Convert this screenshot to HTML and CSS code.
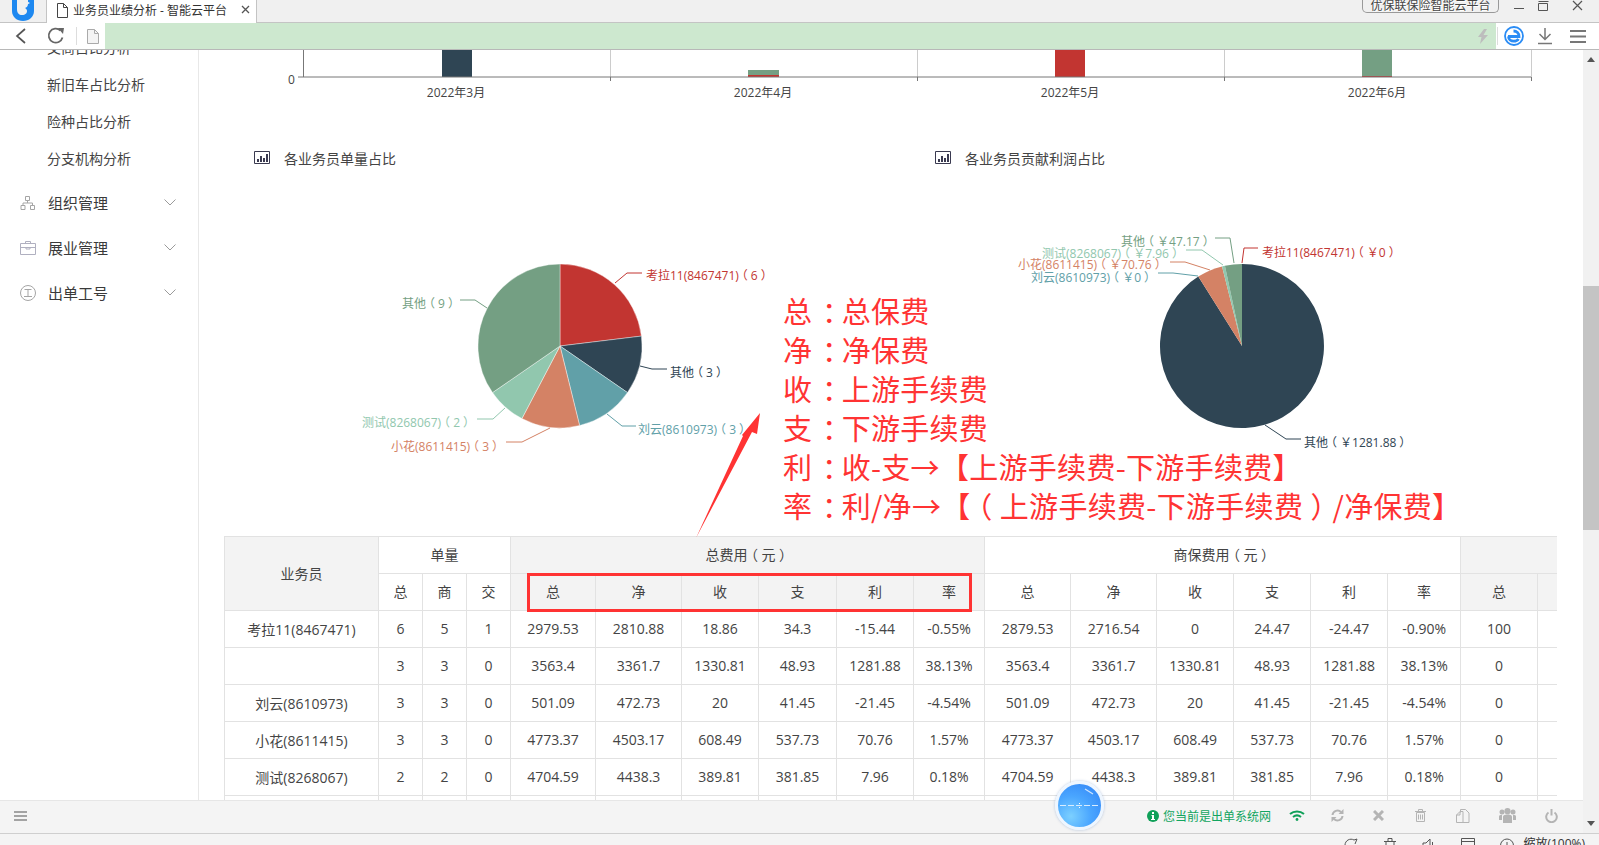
FILE: index.html
```html
<!DOCTYPE html>
<html lang="zh-CN">
<head>
<meta charset="utf-8">
<title>业务员业绩分析 - 智能云平台</title>
<link rel="stylesheet" href="styles.css">
</head>
<body>
<div class="app">
  <header class="tabbar">
    <div class="logo-tab">
      <svg width="24" height="21" viewBox="0 0 24 21"><path fill="#1e88f0" d="M1 0h5v9c0 4 2 6 5 6 3.500 0 5-2 5-4 0-1.500-1-2.500-2-3 1.500-.5 3-1.500 3-4V0h6v11c0 6-5 10-11 10S1 17 1 11z"/><path fill="#fff" d="M17 2l2 1-2 1z"/></svg>
    </div>
    <div class="tab">
      <svg class="tab-doc" width="12" height="15" viewBox="0 0 12 15"><path fill="none" stroke="#444" d="M1.500.5h6l4 4v10h-10zM7.500.5v4h4"/></svg>
      <span class="tab-title">业务员业绩分析 - 智能云平台</span>
      <svg class="tab-close" width="9" height="9" viewBox="0 0 9 9"><path stroke="#555" stroke-width="1.300" d="M1 1l7 7M8 1l-7 7"/></svg>
    </div>
    <div class="window-tools">
      <span class="app-badge">优保联保险智能云平台</span>
      <svg class="win-min" width="12" height="12" viewBox="0 0 12 12"><path stroke="#555" d="M1 8.500h10"/></svg>
      <svg class="win-max" width="13" height="12" viewBox="0 0 13 12"><path fill="none" stroke="#555" d="M1.500 3.500h9v7h-9zM1.500 1.500h10"/></svg>
      <svg class="win-close" width="12" height="12" viewBox="0 0 12 12"><path stroke="#555" stroke-width="1.200" d="M1 1l9 9M10 1l-9 9"/></svg>
    </div>
  </header>
  <nav class="toolbar">
    <svg class="tb-back" width="12" height="16" viewBox="0 0 12 16"><path fill="none" stroke="#555" stroke-width="1.700" d="M10 1L2 8l8 7"/></svg>
    <svg class="tb-reload" width="18" height="18" viewBox="0 0 18 18"><path fill="none" stroke="#666" stroke-width="1.800" d="M15.500 10.500A7 7 0 1 1 13.500 3.500"/><path fill="#666" d="M11 1l6 0-1 6z"/></svg>
    <span class="tb-sep"></span>
    <svg class="tb-doc" width="12" height="15" viewBox="0 0 12 15"><path fill="#f4f4f4" stroke="#aaa" d="M.5.5h7l4 4v10H.5z"/><path fill="none" stroke="#aaa" d="M7.500.5v4h4"/></svg>
    <div class="urlbar">
      <svg width="10" height="15" viewBox="0 0 10 15"><path fill="#bdbdbd" d="M6 0L0 8h3.500L2 15l8-9H5.500L9 0z"/></svg>
    </div>
    <span class="tb-sep tb-sep-r"></span>
    <svg class="tb-edge" width="20" height="20" viewBox="0 0 20 20"><circle cx="10" cy="10" r="9" fill="#fff" stroke="#2a8cf5" stroke-width="1.800"/><path fill="none" stroke="#2a8cf5" stroke-width="2.800" d="M4 10.500h11c0-3.200-2.300-5.500-5.500-5.500M4.500 10.500c0 2.800 2.500 4.700 5.200 4.700 2 0 3.800-.7 4.800-2.200"/></svg>
    <svg class="tb-down" width="16" height="17" viewBox="0 0 16 17"><path fill="none" stroke="#777" stroke-width="1.500" d="M8 0v11M2.500 6L8 11.500 13.500 6M1 15.500h14"/></svg>
    <svg class="tb-menu" width="16" height="13" viewBox="0 0 16 13"><path stroke="#777" stroke-width="2" d="M0 1h16M0 6.500h16M0 12h16"/></svg>
  </nav>

  <div class="viewport">
    <div class="page">
      <div class="main">
        <aside class="sidebar">
          <ul class="submenu">
            <li>交商占比分析</li>
            <li>新旧车占比分析</li>
            <li>险种占比分析</li>
            <li>分支机构分析</li>
          </ul>
          <div class="menu-item">
            <svg class="menu-icon" width="16" height="16" viewBox="0 0 16 16"><path fill="none" stroke="#a5a5a5" d="M5.500 1.500h4v4h-4zM1 10.500h4v4H1zM10.500 10.500h4v4h-4zM7.500 5.500V8M3 10.500V8h9.500v2.500"/></svg>
            <span class="menu-text">组织管理</span>
            <svg class="chevron" width="12" height="7" viewBox="0 0 12 7"><path fill="none" stroke="#9a9a9a" d="M.5.5L6 6l5.500-5.500"/></svg>
          </div>
          <div class="menu-item">
            <svg class="menu-icon" width="16" height="16" viewBox="0 0 16 16"><path fill="none" stroke="#b0b0c0" d="M.5 3.500h15v11H.5zM5.500 3.500V1.500h5v2M.5 7.500h15M6 7.500v1.500h4V7.500"/></svg>
            <span class="menu-text">展业管理</span>
            <svg class="chevron" width="12" height="7" viewBox="0 0 12 7"><path fill="none" stroke="#9a9a9a" d="M.5.500L6 6l5.500-5.500"/></svg>
          </div>
          <div class="menu-item">
            <svg class="menu-icon" width="16" height="16" viewBox="0 0 16 16"><circle cx="8" cy="8" r="7.500" fill="none" stroke="#a5a5a5"/><path fill="none" stroke="#a5a5a5" d="M4.500 4.500h7M8 4.500v7M4 11.500h8"/></svg>
            <span class="menu-text">出单工号</span>
            <svg class="chevron" width="12" height="7" viewBox="0 0 12 7"><path fill="none" stroke="#9a9a9a" d="M.5.500L6 6l5.500-5.500"/></svg>
          </div>
        </aside>

        <section class="content">
          <svg class="bar-chart" width="1384" height="60" viewBox="199 50 1384 60">
            <g class="grid-line"><path d="M610.500 50v27M917.500 50v27M1224.500 50v27M1531.500 50v27"/></g>
            <rect x="442" y="50" width="30" height="27" fill="#2f4554"/>
            <rect x="748" y="70" width="31" height="6" fill="#749f83"/>
            <rect x="748" y="75" width="31" height="2" fill="#c23531"/>
            <rect x="1055" y="50" width="30" height="27" fill="#c23531"/>
            <rect x="1362" y="50" width="30" height="26" fill="#749f83"/>
            <rect x="1362" y="76" width="30" height="1" fill="#c23531"/>
            <g class="axis-line"><path d="M303.500 50v27M298 77h5M303 77h1228M610.500 77v4M917.500 77v4M1224.500 77v4M1531.500 77v4"/></g>
            <text class="axis-num" x="288" y="79">0</text>
            <text class="axis-label" x="456" y="92">2022年3月</text>
            <text class="axis-label" x="763" y="92">2022年4月</text>
            <text class="axis-label" x="1070" y="92">2022年5月</text>
            <text class="axis-label" x="1377" y="92">2022年6月</text>
          </svg>

          <div class="pies">
            <div class="pie-panel">
              <h3 class="pie-title">
                <svg width="16" height="13" viewBox="0 0 16 13"><path fill="none" stroke="#3a3a50" d="M.5.500h15v12H.5z"/><path fill="#3a3a50" d="M3 8h2v3H3zM6 5h2v6H6zM9 7h2v4H9zM12 3h2v8h-2z"/></svg>
                <span>各业务员单量占比</span>
              </h3>
              <svg class="pie" width="681" height="366" viewBox="254 170 681 366">
                <path class="slice" fill="#c23531" d="M560 346V264A82 82 0 0 1 641.400 336.100Z"/>
                <path class="slice" fill="#2f4554" d="M560 346L641.400 336.100A82 82 0 0 1 627.500 392.600Z"/>
                <path class="slice" fill="#61a0a8" d="M560 346L627.500 392.600A82 82 0 0 1 579.600 425.600Z"/>
                <path class="slice" fill="#d48265" d="M560 346L579.600 425.600A82 82 0 0 1 521.900 418.600Z"/>
                <path class="slice" fill="#91c7ae" d="M560 346L521.900 418.600A82 82 0 0 1 492.500 392.600Z"/>
                <path class="slice" fill="#749f83" d="M560 346L492.500 392.600A82 82 0 0 1 560 264Z"/>
                <path class="lead s-red" d="M615 283l12-10h15"/>
                <path class="lead s-dark" d="M640 366l12 3h15"/>
                <path class="lead s-teal" d="M607 414l15 12h14"/>
                <path class="lead s-orange" d="M550 428l-28 14h-16"/>
                <path class="lead s-light" d="M505 408l-12 11h-16"/>
                <path class="lead s-green" d="M487 308l-12-8h-15"/>
                <text class="lbl f-red" x="646" y="275">考拉11(8467471)<tspan dx="-3">（</tspan><tspan dx="3">6</tspan><tspan dx="3">）</tspan></text>
                <text class="lbl f-dark" x="670" y="372">其他<tspan dx="-3">（</tspan><tspan dx="3">3</tspan><tspan dx="3">）</tspan></text>
                <text class="lbl f-teal" x="638" y="429">刘云(8610973)<tspan dx="-3">（</tspan><tspan dx="3">3</tspan><tspan dx="3">）</tspan></text>
                <text class="lbl f-orange" x="391" y="446">小花(8611415)<tspan dx="-3">（</tspan><tspan dx="3">3</tspan><tspan dx="3">）</tspan></text>
                <text class="lbl f-light" x="362" y="422">测试(8268067)<tspan dx="-3">（</tspan><tspan dx="3">2</tspan><tspan dx="3">）</tspan></text>
                <text class="lbl f-green" x="402" y="303">其他<tspan dx="-3">（</tspan><tspan dx="3">9</tspan><tspan dx="3">）</tspan></text>
              </svg>
            </div>
            <div class="pie-panel">
              <h3 class="pie-title">
                <svg width="16" height="13" viewBox="0 0 16 13"><path fill="none" stroke="#3a3a50" d="M.5.500h15v12H.5z"/><path fill="#3a3a50" d="M3 8h2v3H3zM6 5h2v6H6zM9 7h2v4H9zM12 3h2v8h-2z"/></svg>
                <span>各业务员贡献利润占比</span>
              </h3>
              <svg class="pie" width="648" height="366" viewBox="935 170 648 366">
                <path fill="#2f4554" d="M1242 346V264A82 82 0 1 1 1198.300 276.600Z"/>
                <path fill="#d48265" d="M1242 346L1198.300 276.600A82 82 0 0 1 1222.050 266.460Z"/>
                <path fill="#91c7ae" d="M1242 346L1222.050 266.460A82 82 0 0 1 1224.900 265.800Z"/>
                <path fill="#749f83" d="M1242 346L1224.900 265.800A82 82 0 0 1 1242 264Z"/>
                <path class="lead s-green" d="M1215 238h15l4 25"/>
                <path class="lead s-red" d="M1242 263l2-15h14"/>
                <path class="lead s-light" d="M1186 250h16l21 15"/>
                <path class="lead s-orange" d="M1170 262h15l25 8"/>
                <path class="lead s-teal" d="M1158 273h15l25 3"/>
                <path class="lead s-dark" d="M1265 425l21 14h15"/>
                <text class="lbl f-green" x="1121" y="241">其他<tspan dx="-3">（</tspan><tspan dx="3">￥47.17</tspan><tspan dx="3">）</tspan></text>
                <text class="lbl f-red" x="1262" y="252">考拉11(8467471)<tspan dx="-3">（</tspan><tspan dx="3">￥0</tspan><tspan dx="3">）</tspan></text>
                <text class="lbl f-light" x="1042" y="253">测试(8268067)<tspan dx="-3">（</tspan><tspan dx="3">￥7.96</tspan><tspan dx="3">）</tspan></text>
                <text class="lbl f-orange" x="1018" y="264">小花(8611415)<tspan dx="-3">（</tspan><tspan dx="3">￥70.76</tspan><tspan dx="3">）</tspan></text>
                <text class="lbl f-teal" x="1031" y="277">刘云(8610973)<tspan dx="-3">（</tspan><tspan dx="3">￥0</tspan><tspan dx="3">）</tspan></text>
                <text class="lbl f-dark" x="1304" y="442">其他<tspan dx="-3">（</tspan><tspan dx="3">￥1281.88</tspan><tspan dx="3">）</tspan></text>
              </svg>
            </div>
          </div>

          <div class="table-wrap">
            <table class="report">
              <colgroup>
                <col class="c154"><col class="c44"><col class="c44"><col class="c44">
                <col class="c85"><col class="c86"><col class="c77"><col class="c78"><col class="c77"><col class="c71">
                <col class="c86"><col class="c86"><col class="c77"><col class="c77"><col class="c77"><col class="c73">
                <col class="c77"><col class="c77">
              </colgroup>
              <thead>
                <tr>
                  <th rowspan="2" class="grey">业务员</th>
                  <th colspan="3">单量</th>
                  <th colspan="6" class="grey">总费用<span class="po">（</span>元<span class="pc">）</span></th>
                  <th colspan="6">商保费用<span class="po">（</span>元<span class="pc">）</span></th>
                  <th colspan="2" class="grey"></th>
                </tr>
                <tr>
                  <th>总</th><th>商</th><th>交</th>
                  <th class="grey">总</th><th class="grey">净</th><th class="grey">收</th><th class="grey">支</th><th class="grey">利</th><th class="grey">率</th>
                  <th>总</th><th>净</th><th>收</th><th>支</th><th>利</th><th>率</th>
                  <th class="grey">总</th><th class="grey"></th>
                </tr>
              </thead>
              <tbody>
                <tr><td>考拉11(8467471)</td><td>6</td><td>5</td><td>1</td><td>2979.53</td><td>2810.88</td><td>18.86</td><td>34.3</td><td>-15.44</td><td>-0.55%</td><td>2879.53</td><td>2716.54</td><td>0</td><td>24.47</td><td>-24.47</td><td>-0.90%</td><td>100</td><td></td></tr>
                <tr><td></td><td>3</td><td>3</td><td>0</td><td>3563.4</td><td>3361.7</td><td>1330.81</td><td>48.93</td><td>1281.88</td><td>38.13%</td><td>3563.4</td><td>3361.7</td><td>1330.81</td><td>48.93</td><td>1281.88</td><td>38.13%</td><td>0</td><td></td></tr>
                <tr><td>刘云(8610973)</td><td>3</td><td>3</td><td>0</td><td>501.09</td><td>472.73</td><td>20</td><td>41.45</td><td>-21.45</td><td>-4.54%</td><td>501.09</td><td>472.73</td><td>20</td><td>41.45</td><td>-21.45</td><td>-4.54%</td><td>0</td><td></td></tr>
                <tr><td>小花(8611415)</td><td>3</td><td>3</td><td>0</td><td>4773.37</td><td>4503.17</td><td>608.49</td><td>537.73</td><td>70.76</td><td>1.57%</td><td>4773.37</td><td>4503.17</td><td>608.49</td><td>537.73</td><td>70.76</td><td>1.57%</td><td>0</td><td></td></tr>
                <tr><td>测试(8268067)</td><td>2</td><td>2</td><td>0</td><td>4704.59</td><td>4438.3</td><td>389.81</td><td>381.85</td><td>7.96</td><td>0.18%</td><td>4704.59</td><td>4438.3</td><td>389.81</td><td>381.85</td><td>7.96</td><td>0.18%</td><td>0</td><td></td></tr>
                <tr><td></td><td></td><td></td><td></td><td></td><td></td><td></td><td></td><td></td><td></td><td></td><td></td><td></td><td></td><td></td><td></td><td></td><td></td></tr>
              </tbody>
            </table>
            <div class="red-box"></div>
          </div>

          <div class="note">
            <div>总<span class="colon">：</span>总保费</div>
            <div>净<span class="colon">：</span>净保费</div>
            <div>收<span class="colon">：</span>上游手续费</div>
            <div>支<span class="colon">：</span>下游手续费</div>
            <div>利<span class="colon">：</span>收-支→【上游手续费-下游手续费】</div>
            <div>率<span class="colon">：</span>利/净→【<span class="po">（</span>上游手续费-下游手续费<span class="pc">）</span>/净保费】</div>
          </div>
          <svg class="note-arrow" width="70" height="130" viewBox="694 411 70 130"><path fill="#ff3333" d="M696 538L743 436l-1-1 18-22-3 21-5-2z"/></svg>
        </section>
      </div>

      <footer class="bottombar">
        <svg class="bb-menu" width="13" height="10" viewBox="0 0 13 10"><path stroke="#888" stroke-width="1.300" d="M0 1h13M0 5h13M0 9h13"/></svg>
        <div class="bb-right">
          <svg class="bb-info" width="12" height="12" viewBox="0 0 12 12"><circle cx="6" cy="6" r="6" fill="#0fa058"/><path fill="#fff" d="M5 2h2v2H5zM4.500 5H7v4h1v1H4V9h1V6h-.5z"/></svg>
          <span class="bb-text">您当前是出单系统网</span>
          <span class="slot"><svg width="16" height="11" viewBox="0 0 16 11"><path fill="none" stroke="#0fa058" stroke-width="2" d="M1 4c4-3.500 10-3.500 14 0M4 7c2.500-2 5.500-2 8 0"/><circle cx="8" cy="9.500" r="1.400" fill="#0fa058"/></svg></span>
          <span class="slot"><svg width="13" height="13" viewBox="0 0 13 13"><path fill="none" stroke="#b4b4b4" stroke-width="2" d="M1.500 6a5 5 0 0 1 8.500-3M11.500 7a5 5 0 0 1-8.500 3"/><path fill="#b4b4b4" d="M12.500 0v5h-5zM.5 13V8h5z"/></svg></span>
          <span class="slot"><svg width="11" height="11" viewBox="0 0 11 11"><path stroke="#b4b4b4" stroke-width="3" d="M1 1l9 9M10 1l-9 9"/></svg></span>
          <span class="slot slot-mid"><svg width="11" height="13" viewBox="0 0 11 13"><path fill="none" stroke="#b4b4b4" d="M1.500 3.500h8v9h-8zM0 2.500h11M3.500 2.500V.5h4v2M3.500 5.500v5M5.500 5.500v5M7.500 5.500v5"/></svg></span>
          <span class="slot slot-wide"><svg width="14" height="14" viewBox="0 0 14 14"><path fill="none" stroke="#b4b4b4" d="M4.500 3.500V.5h5l3.500 3.500v9.500H7M.5 6L4 2.500h3v11H.5zM4 2.500V6H.5"/></svg></span>
          <span class="slot slot-wide"><svg width="17" height="15" viewBox="0 0 17 15"><g fill="#b4b4b4"><circle cx="8.500" cy="3.200" r="3.100"/><circle cx="3" cy="4" r="2.500"/><circle cx="14" cy="4" r="2.500"/><path d="M4 15V9c0-1.500 1-2.500 4.500-2.500S13 7.500 13 9v6zM0 12V8.500c0-1 1-1.800 3-1.800V12zM17 12V8.500c0-1-1-1.800-3-1.800V12z"/></g></svg></span>
          <span class="slot slot-wide"><svg width="13" height="14" viewBox="0 0 13 14"><path fill="none" stroke="#b4b4b4" stroke-width="2" d="M3.500 3.500a5.300 5.300 0 1 0 6 0M6.500 0v6.500"/></svg></span>
        </div>
      </footer>

      <div class="ball">
        <svg width="43" height="43" viewBox="0 0 43 43"><path stroke="#d8ecff" stroke-width="1.200" fill="none" stroke-dasharray="6 2" d="M2 21.500h39"/><path stroke="#fff" stroke-width="1" d="M21.500 19v1M21.500 23v1"/><path stroke="#cfe6ff" stroke-width="1.200" fill="none" d="M27 5l8 5"/></svg>
      </div>
    </div>
    <div class="scrollbar">
      <span class="sb-up"></span>
      <span class="sb-thumb"></span>
      <span class="sb-down"></span>
    </div>
  </div>

  <footer class="statusbar">
    <svg width="14" height="14" viewBox="0 0 14 14"><path fill="none" stroke="#555" d="M1 13V7a6 6 0 0 1 9-5l3-1-2 5"/></svg>
    <svg width="14" height="14" viewBox="0 0 14 14"><path fill="none" stroke="#555" d="M1 3.500h12M3 3.500V13h8V3.500M5 3.500v-3h4v3"/></svg>
    <svg width="14" height="14" viewBox="0 0 14 14"><path fill="none" stroke="#555" d="M1 5v6h3l4 3V1L4 5zM10.500 4v7"/></svg>
    <svg width="14" height="14" viewBox="0 0 14 14"><path fill="none" stroke="#555" d="M.5.500h13V14H.5zM.5 3.500h13"/></svg>
    <svg width="14" height="14" viewBox="0 0 14 14"><circle cx="7" cy="7.500" r="6.500" fill="none" stroke="#555"/><path stroke="#555" d="M7 4v7M3.500 7.500h7"/></svg>
    <span>缩放(100%)</span>
  </footer>
</div>
</body>
</html>
```
FILE: styles.css
```css
* { box-sizing: border-box; }
html, body { margin: 0; padding: 0; height: 100%; overflow: hidden; background: #fff; }
body { font-family: "Open Sans", "Noto Sans CJK SC", sans-serif; color: #333; text-spacing-trim: space-all; }
ul { list-style: none; margin: 0; padding: 0; }
h3 { margin: 0; font-weight: normal; }
svg { display: block; flex: none; }
.po { margin-left: -.25em; margin-right: .25em; }
.pc { margin-left: .25em; margin-right: -.25em; }
.colon { margin-left: .33em; margin-right: -.33em; }

.app { width: 1599px; height: 845px; display: flex; flex-direction: column; overflow: hidden; }

/* tabs */
.tabbar { height: 23px; flex: none; display: flex; background: #f0f0f0; border-bottom: 1px solid #c4c4c4; position: relative; }
.logo-tab { width: 47px; height: 22px; border-right: 1px solid #c4c4c4; padding-left: 11px; }
.tab { width: 210px; height: 23px; background: #fff; border-right: 1px solid #c4c4c4; display: flex; align-items: center; padding: 0 6px 4px 9px; font-size: 12px; color: #333; }
.tab-doc { margin-top: 2px; }
.tab-title { margin-left: 5px; white-space: nowrap; flex: 1; }
.window-tools { margin-left: auto; display: flex; align-items: flex-start; height: 22px; }
.app-badge { width: 137px; height: 13px; border: 1px solid #999; border-top: none; border-radius: 0 0 5px 5px; font-size: 12px; line-height: 11px; text-align: center; color: #444; text-shadow: 0 0 1px #fff, 1px 1px 0 #fff; white-space: nowrap; overflow: hidden; }
.win-min { margin-left: 14px; }
.win-max { margin-left: 12px; }
.win-close { margin-left: 22px; margin-right: 15px; }

/* toolbar */
.toolbar { height: 27px; flex: none; display: flex; align-items: center; background: #fff; border-bottom: 1px solid #b8b8b8; }
.tb-back { margin-left: 15px; }
.tb-reload { margin-left: 20px; }
.tb-sep { width: 1px; height: 18px; background: #ddd; margin-left: 11px; }
.tb-doc { margin-left: 10px; }
.urlbar { width: 1391px; height: 26px; margin-left: 6px; background: #cde8cf; display: flex; align-items: center; justify-content: flex-end; padding-right: 8px; }
.tb-sep-r { margin-left: 1px; }
.tb-edge { margin-left: 6px; }
.tb-down { margin-left: 13px; }
.tb-menu { margin-left: 17px; }

/* page */
.viewport { height: 783px; flex: none; display: flex; }
.page { width: 1583px; position: relative; display: flex; flex-direction: column; }
.main { height: 750px; flex: none; display: flex; overflow: hidden; }

.sidebar { width: 199px; flex: none; border-right: 1px solid #e8e8e8; color: #333; }
.submenu { margin-top: -21px; margin-bottom: 3px; }
.submenu li { height: 37px; line-height: 37px; padding-left: 47px; font-size: 14px; color: #444; }
.menu-item { height: 45px; display: flex; align-items: center; padding-left: 20px; }
.menu-text { width: 116px; margin-left: 12px; font-size: 15px; color: #3a3a3a; }
.chevron { margin-top: -1px; }

.content { flex: 1; position: relative; overflow: hidden; }
.bar-chart { height: 60px; }
.grid-line path { stroke: #ccc; fill: none; }
.axis-line path { stroke: #777; fill: none; }
.axis-label { font-size: 12px; fill: #444; text-anchor: middle; dominant-baseline: central; }
.axis-num { font-size: 12px; fill: #444; dominant-baseline: central; }

.pies { display: grid; grid-template-columns: 681px 1fr; padding-left: 55px; margin-top: 38px; }
.pie-title { height: 22px; padding-bottom: 3px; display: flex; align-items: center; font-size: 14px; color: #444; }
.pie-title span { margin-left: 14px; }
.slice { stroke: #fff; stroke-width: .4; }
.lead { fill: none; stroke-width: 1; }
.lbl { font-size: 12px; dominant-baseline: central; }
.s-red { stroke: #c23531; } .f-red { fill: #c23531; }
.s-dark { stroke: #2f4554; } .f-dark { fill: #2f4554; }
.s-teal { stroke: #61a0a8; } .f-teal { fill: #61a0a8; }
.s-orange { stroke: #d48265; } .f-orange { fill: #d48265; }
.s-light { stroke: #91c7ae; } .f-light { fill: #91c7ae; }
.s-green { stroke: #749f83; } .f-green { fill: #749f83; }

/* table */
.table-wrap { position: relative; margin-left: 25px; width: 1333px; overflow: hidden; }
.report { border-collapse: collapse; table-layout: fixed; width: 1390px; font-size: 14px; color: #444; }
.report th, .report td { border: 1px solid #e2e2e2; height: 37px; padding: 0 0 1px; text-align: center; font-weight: normal; white-space: nowrap; }
.report th { background: #fff; padding-bottom: 2px; }
.report th.grey { background: #f3f3f3; }
.c154 { width: 154px; } .c44 { width: 44px; } .c85 { width: 85px; } .c86 { width: 86px; }
.c77 { width: 77px; } .c78 { width: 78px; } .c71 { width: 71px; } .c73 { width: 73px; }
.red-box { position: absolute; left: 303px; top: 37px; width: 445px; height: 39px; border: 3px solid #f33; }

/* annotation */
.note { position: absolute; left: 584px; top: 241px; font-size: 29px; line-height: 39px; letter-spacing: .3px; color: #ff3333; white-space: nowrap; font-family: "Noto Sans CJK SC", sans-serif; }
.note-arrow { position: absolute; left: 495px; top: 361px; }

/* bottom bar */
.bottombar { height: 33px; flex: none; display: flex; align-items: center; background: #f4f4f4; border-top: 1px solid #e6e6e6; padding: 0 10px 3px 14px; }
.bb-right { margin-left: auto; display: flex; align-items: center; }
.bb-text { margin-left: 4px; margin-right: 5px; font-size: 12px; color: #12a560; white-space: nowrap; }
.slot { width: 41px; display: flex; justify-content: center; }
.slot-mid { width: 42px; }
.slot-wide { width: 44px; }

.ball { position: absolute; left: 1055px; top: 731px; width: 49px; height: 49px; border-radius: 50%; border: 3px solid #eef6ff; background: radial-gradient(circle at 30% 75%, #7cd0ff 0%, #4aa6ff 45%, #2f80f5 100%); box-shadow: 0 0 3px rgba(80,120,180,.4); }

/* scrollbar */
.scrollbar { width: 16px; flex: none; background: #f1f1f1; display: flex; flex-direction: column; align-items: center; }
.sb-up { width: 0; height: 0; margin-top: 7px; border: 4px solid transparent; border-top: none; border-bottom: 5px solid #555; }
.sb-thumb { width: 16px; height: 244px; margin-top: 224px; background: #c4c4c4; }
.sb-down { width: 0; height: 0; margin-top: auto; margin-bottom: 7px; border: 4px solid transparent; border-bottom: none; border-top: 5px solid #555; }

/* status bar */
.statusbar { height: 12px; flex: none; background: #f4f4f4; border-top: 1px solid #cfcfcf; display: flex; align-items: flex-start; justify-content: flex-end; gap: 25px; padding: 4px 14px 0 0; font-size: 12px; line-height: 16px; color: #333; overflow: hidden; }
.statusbar span { margin-left: -16px; margin-top: -2px; }
```
